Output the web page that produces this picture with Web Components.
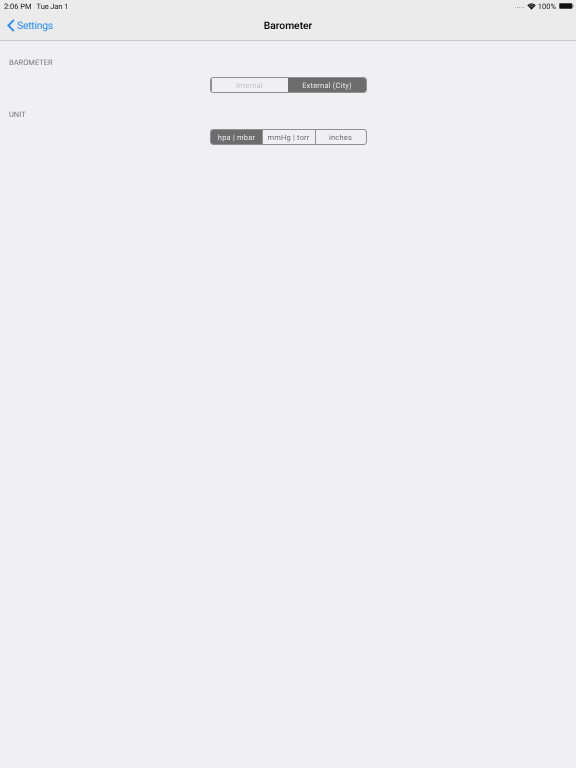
<!DOCTYPE html>
<html><head><meta charset="utf-8"><style>
html,body{margin:0;padding:0;height:100%;background:#efeff4;font-family:Roboto,"Liberation Sans",sans-serif;text-rendering:geometricPrecision}
</style></head><body>
<app-navbar title-text="Barometer" back="Settings"></app-navbar>
<settings-section label="BAROMETER"><seg-control widths="77,78" selected="1" items="Internal|External (City)" disabled-first></seg-control></settings-section>
<settings-section label="UNIT"><seg-control widths="51,53,51" selected="0" items="hpa | mbar|mmHg | torr|inches"></seg-control></settings-section>
<script>
class AppNavbar extends HTMLElement{constructor(){super();const s=this.attachShadow({mode:'open'});
s.innerHTML=`<style>
:host{display:block;height:40px;background:#ebebeb;border-bottom:1px solid #c8c8ca;position:relative;color:#000}
.status{height:12px;display:flex;align-items:center;justify-content:space-between;padding:0 2px 0 4px;font-size:7.5px;color:#1a1a1a;will-change:transform}
.l{display:flex;gap:6px}.r{display:flex;align-items:center;gap:2px}
.bar{height:27px;display:grid;grid-template-columns:1fr auto 1fr;align-items:center;will-change:transform}
.back{display:flex;align-items:center;gap:2px;padding-left:7px;color:#2a8cf6;font-size:10.4px;letter-spacing:-.25px}
h1{margin:0;font-size:10.3px;font-weight:500}
svg{display:block}
.dots{width:9px;height:0;border-bottom:1px dotted #aaa;margin-right:1px;margin-top:3px}
.tue{letter-spacing:-.1px;margin-left:-1px}
</style>
<div class="status"><div class="l"><span>2:06 PM</span><span class="tue">Tue Jan 1</span></div>
<div class="r"><span class="dots"></span>
<svg width="9" height="7" viewBox="0 0 18 14"><path d="M9 13.5 L0.5 4.5 C5 0 13 0 17.5 4.5Z" fill="#111"/><path d="M3.3 5.6C6.5 3 11.5 3 14.7 5.6" stroke="#ebebeb" stroke-width=".9" fill="none"/><path d="M5.8 8.3C7.7 6.9 10.3 6.9 12.2 8.3" stroke="#ebebeb" stroke-width=".9" fill="none"/></svg>
<span>100%</span>
<svg width="15" height="6" viewBox="0 0 15 6" style="margin-left:1px"><rect x=".25" y=".25" width="13" height="5.5" rx="1.3" fill="#111" stroke="#555" stroke-width=".5"/><rect x="13.8" y="2" width="1" height="2" rx=".4" fill="#888"/></svg></div></div>
<div class="bar"><div class="back"><svg width="8" height="13" viewBox="0 0 8 13"><path d="M6.9 .9 1.4 6.5l5.5 5.6" fill="none" stroke="#2a8cf6" stroke-width="1.9"/></svg><span>${this.getAttribute('back')}</span></div>
<h1>${this.getAttribute('title-text')}</h1><div></div></div>`}}
customElements.define('app-navbar',AppNavbar);
class SettingsSection extends HTMLElement{constructor(){super();const s=this.attachShadow({mode:'open'});
s.innerHTML=`<style>
:host{display:block;padding:17px 9px 0;will-change:transform}
.lab{font-size:7.5px;line-height:9px;color:#77777b;margin-bottom:10px}
.c{display:flex;justify-content:center;margin:0 -9px}
</style><div class="lab">${this.getAttribute('label')}</div><div class="c"><slot></slot></div>`}}
customElements.define('settings-section',SettingsSection);
class SegControl extends HTMLElement{constructor(){super();const s=this.attachShadow({mode:'open'});
const items=this.getAttribute('items').split(/\|(?! )/);
const w=this.getAttribute('widths').split(',');const sel=+this.getAttribute('selected');const dis=this.hasAttribute('disabled-first');
s.innerHTML=`<style>
:host{display:inline-flex;height:16px;box-sizing:border-box;border:1px solid #909092;border-radius:3px;overflow:hidden}
div{display:flex;align-items:center;justify-content:center;box-sizing:border-box;font-size:7.5px;color:#707072;letter-spacing:.2px;border-left:1px solid #909092}
div:first-child{border-left:0}
.on{background:#6d6d6d;color:#e8e8ec;border-left-color:#6d6d6d}
.dis{color:#c4c4c8}
</style>`+items.map((t,i)=>`<div class="${i==sel?'on':''} ${dis&&i==0?'dis':''}" style="width:${w[i]}px">${t}</div>`).join('')}}
customElements.define('seg-control',SegControl);
</script></body></html>
